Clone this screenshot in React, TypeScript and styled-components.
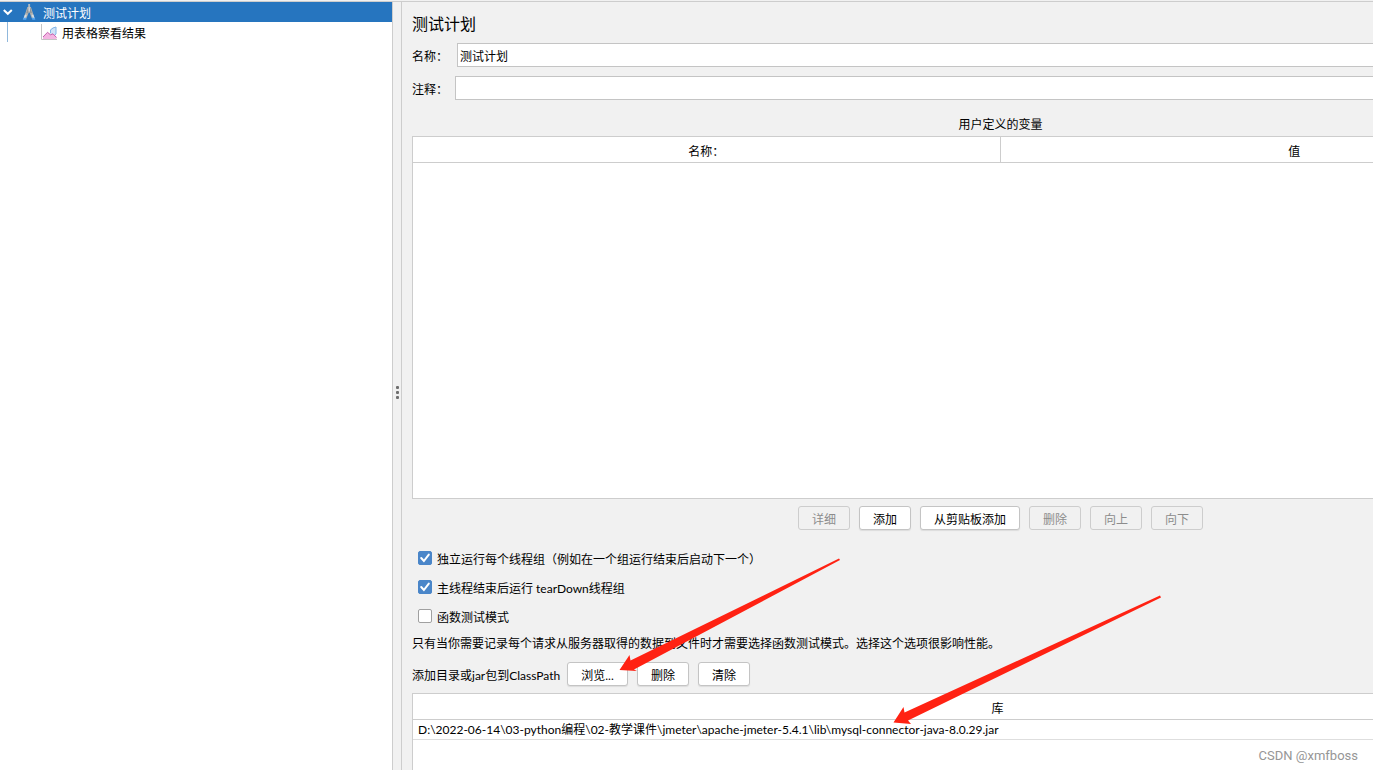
import React from "react";
import styled, { createGlobalStyle } from "styled-components";

const line = "#cdcdcd";

const GlobalStyle = createGlobalStyle`
  * { box-sizing: border-box; }
  body {
    margin: 0;
    overflow: hidden;
    background: #f1f1f1;
    color: #000;
    font-family: Lato, "Noto Sans CJK SC", sans-serif;
    font-size: 12px;
    line-height: 20px;
  }
  button, input { font: inherit; color: inherit; margin: 0; }
`;

const Window = styled.div`
  position: relative;
  display: flex;
  height: 100vh;
  padding-top: 1px;
  overflow: hidden;
`;

const Tree = styled.nav`
  flex: 0 0 392px;
  background: #fff;
  border-top: 1px solid ${line};
`;

const TreeRow = styled.a<{ $selected?: boolean }>`
  display: flex;
  align-items: center;
  gap: ${(p) => (p.$selected ? 7 : 4)}px;
  height: 20px;
  padding-left: ${(p) => (p.$selected ? 2 : 7)}px;
  color: ${(p) => (p.$selected ? "#fff" : "#000")};
  background: ${(p) => (p.$selected ? "#2675bf" : "#fff")};
  text-decoration: none;
`;

const TreeText = styled.span`
  padding-top: 4px;
`;

const Branch = styled.span`
  width: 30px;
  height: 20px;
  border-left: 1px solid #90b8dc;
`;

const Divider = styled.div`
  flex: 0 0 10px;
  display: flex;
  flex-direction: column;
  align-items: center;
  justify-content: center;
  gap: 2px;
  padding: 12px 0 0;
  border: 1px solid ${line};
  border-bottom: 0;
`;

const Dot = styled.i`
  width: 3px;
  height: 3px;
  border-radius: 1px;
  background: #6e6e6e;
`;

const Main = styled.main`
  flex: 1;
  min-width: 0;
  overflow: hidden;
  border-top: 1px solid ${line};
`;

const Form = styled.div`
  display: flex;
  flex-direction: column;
  height: 100%;
  margin-right: -216px;
  padding: 10px 0 0 10px;
  & > * { flex-shrink: 0; }
`;

const Title = styled.h1`
  margin: 0 0 7px;
  font-size: 16px;
  font-weight: 400;
  line-height: 24px;
`;

const Field = styled.div<{ $gap: number }>`
  display: flex;
  align-items: center;
  gap: ${(p) => p.$gap}px;
  margin-bottom: 9px;
`;

const FieldLabel = styled.label`
  width: 36px;
  padding-top: 4px;
`;

const TextInput = styled.input`
  flex: 1;
  height: 24px;
  padding: 1px 2px 0;
  border: 1px solid #c4c4c4;
  background: #fff;
  outline: none;
`;

const Caption = styled.h2`
  margin: 6px 0 1px;
  font-size: 12px;
  font-weight: 400;
  line-height: 20px;
  text-align: center;
`;

const Pane = styled.div`
  flex: 0 0 363px;
  border: 1px solid ${line};
  background: #fff;
`;

const LibraryPane = styled(Pane)`
  flex: 1 0 76px;
  margin-right: 6px;
  border-bottom: 0;
`;

const Grid = styled.table`
  width: 100%;
  table-layout: fixed;
  border-collapse: separate;
  border-spacing: 0;
`;

const HeadCell = styled.th`
  height: 26px;
  padding: 5px 0 0;
  border-bottom: 1px solid ${line};
  font-weight: 400;
  &:not(:last-child) { border-right: 1px solid ${line}; }
`;

const Cell = styled.td`
  height: 20px;
  padding: 0 5px;
  border-bottom: 1px solid #dedede;
  line-height: 19px;
`;

const Buttons = styled.div`
  display: flex;
  justify-content: center;
  gap: 9px;
  padding: 7px 0 13px;
`;

const Button = styled.button<{ $width?: number }>`
  width: ${(p) => p.$width ?? 52}px;
  height: 24px;
  padding: 4px 0 0;
  border: 1px solid #c4c4c4;
  border-radius: 3px;
  background: #fff;
  box-shadow: 0 1px 1px #dcdcdc;
  line-height: 18px;
  &:disabled {
    border-color: #cdcdcd;
    background: #f1f1f1;
    box-shadow: none;
    color: #8c8c8c;
  }
`;

const Option = styled.label`
  display: flex;
  align-items: center;
  gap: 5px;
  height: 29px;
  padding-left: 6px;
`;

const Check = styled.input`
  appearance: none;
  width: 14px;
  height: 14px;
  border: 1px solid #a0a0a0;
  border-radius: 2px;
  background: #fff;
  &:checked {
    border-color: #4a86c9;
    background: #4a86c9;
  }
`;

const CheckBox = styled.span`
  display: grid;
  & > * { grid-area: 1 / 1; }
`;

const OptionText = styled.span`
  padding-top: 4px;
`;

const Note = styled.p`
  margin: 2px 0 0;
  line-height: 24px;
`;

const PathRow = styled.div`
  display: flex;
  align-items: center;
  gap: 9px;
  margin: 6px 0 7px;
`;

const PathLabel = styled.span`
  width: 146px;
  padding-top: 4px;
  white-space: nowrap;
`;

const Arrows = styled.svg`
  position: absolute;
  left: 0;
  top: 0;
  pointer-events: none;
`;

const Watermark = styled.div`
  position: absolute;
  right: 15px;
  bottom: 4px;
  color: #969696;
  font-family: Roboto, sans-serif;
  font-size: 13px;
`;

const Chevron = () => (
  <svg width="11" height="10" viewBox="0 0 11 10" fill="none">
    <path d="M1.8 3l4 3.8L9.8 3" stroke="#fff" strokeWidth="2" />
  </svg>
);

const PlanIcon = () => (
  <svg width="16" height="18" viewBox="0 0 16 18">
    <path d="M8.2 1h1.9v3.5H8.2z" fill="#aeb9c3" />
    <path d="M7.4 4h3.5l3.4 10.5-2.4 1L9.6 9.5H8.7l-2.3 6-2.5-1z" fill="#b4b4b0" />
    <path d="M7.9 5h2.5l1.5 4.8-1.2.8-1.1-2.1h-.9l-1.2 2.1-1.2-.8z" fill="#8d959b" />
    <path d="M8.6 4.5h1.1v4H8.6z" fill="#e8eef4" />
    <path d="M5 11.5l1.7.6-1.6 3.7H3.4zM13.3 11.5l-1.7.6 1.6 3.7h1.7z" fill="#d4dde5" />
    <path d="M3.3 14.8h3v2H2.8zM12 14.8h2.8l.6 2H12.3z" fill="#55a5ef" />
  </svg>
);

const ChartIcon = () => (
  <svg width="17" height="18" viewBox="0 0 17 18">
    <path d="M.5 1v15.5H16" fill="none" stroke="#c4c4c4" />
    <path d="M9 9V6.5L12 4.5l3-.5v8l-2.5 1-3.5-1z" fill="#cfe3f7" />
    <path d="M9.5 10V7l2.5-2 3-1v7l-1.5 1.5" fill="none" stroke="#83b4e6" />
    <path d="M2 14l4.5-4.5 3 2.3 2.5-1 3.5 3.7V16H2z" fill="#f3b5e2" />
    <path d="M2 14l4.5-4.7 3 2.5 2.5-1 3.5 3.7" fill="none" stroke="#c45fae" />
  </svg>
);

const CheckOption = ({ text, on }: { text: string; on?: boolean }) => (
  <Option>
    <CheckBox>
      <Check type="checkbox" defaultChecked={on} />
      {on && (
        <svg width="14" height="14" viewBox="0 0 14 14" fill="none">
          <path d="M3.2 7l2.7 3L10.8 3.6" stroke="#fff" strokeWidth="2" strokeLinecap="round" />
        </svg>
      )}
    </CheckBox>
    <OptionText>{text}</OptionText>
  </Option>
);

export default function App() {
  return (
    <Window>
      <GlobalStyle />
      <Tree>
        <TreeRow href="#plan" $selected>
          <Chevron />
          <PlanIcon />
          <TreeText>测试计划</TreeText>
        </TreeRow>
        <TreeRow href="#results">
          <Branch />
          <ChartIcon />
          <TreeText>用表格察看结果</TreeText>
        </TreeRow>
      </Tree>
      <Divider>
        <Dot />
        <Dot />
        <Dot />
      </Divider>
      <Main>
        <Form>
          <Title>测试计划</Title>
          <Field $gap={9}>
            <FieldLabel htmlFor="name">名称：</FieldLabel>
            <TextInput id="name" defaultValue="测试计划" />
          </Field>
          <Field $gap={7}>
            <FieldLabel htmlFor="comment">注释：</FieldLabel>
            <TextInput id="comment" />
          </Field>
          <Caption>用户定义的变量</Caption>
          <Pane>
            <Grid>
              <thead>
                <tr>
                  <HeadCell>名称：</HeadCell>
                  <HeadCell>值</HeadCell>
                </tr>
              </thead>
            </Grid>
          </Pane>
          <Buttons>
            <Button disabled>详细</Button>
            <Button>添加</Button>
            <Button $width={100}>从剪贴板添加</Button>
            <Button disabled>删除</Button>
            <Button disabled>向上</Button>
            <Button disabled>向下</Button>
          </Buttons>
          <CheckOption on text="独立运行每个线程组（例如在一个组运行结束后启动下一个）" />
          <CheckOption on text="主线程结束后运行 tearDown线程组" />
          <CheckOption text="函数测试模式" />
          <Note>只有当你需要记录每个请求从服务器取得的数据到文件时才需要选择函数测试模式。选择这个选项很影响性能。</Note>
          <PathRow>
            <PathLabel>添加目录或jar包到ClassPath</PathLabel>
            <Button $width={61}>浏览...</Button>
            <Button>删除</Button>
            <Button>清除</Button>
          </PathRow>
          <LibraryPane>
            <Grid>
              <thead>
                <tr>
                  <HeadCell>库</HeadCell>
                </tr>
              </thead>
              <tbody>
                <tr>
                  <Cell>D:\2022-06-14\03-python编程\02-教学课件\jmeter\apache-jmeter-5.4.1\lib\mysql-connector-java-8.0.29.jar</Cell>
                </tr>
              </tbody>
            </Grid>
          </LibraryPane>
        </Form>
      </Main>
      <Arrows width="1373" height="770" viewBox="0 0 1373 770" fill="#ff2213">
        <path d="M840 560L634 669.5L637 671L619.5 670L629.5 655L630.5 660.5L839 558.5z" />
        <path d="M1161 597.5L908 720.5L911 724L893.5 722.5L903.5 707L904.5 712.5L1160 595.5z" />
      </Arrows>
      <Watermark>CSDN @xmfboss</Watermark>
    </Window>
  );
}
